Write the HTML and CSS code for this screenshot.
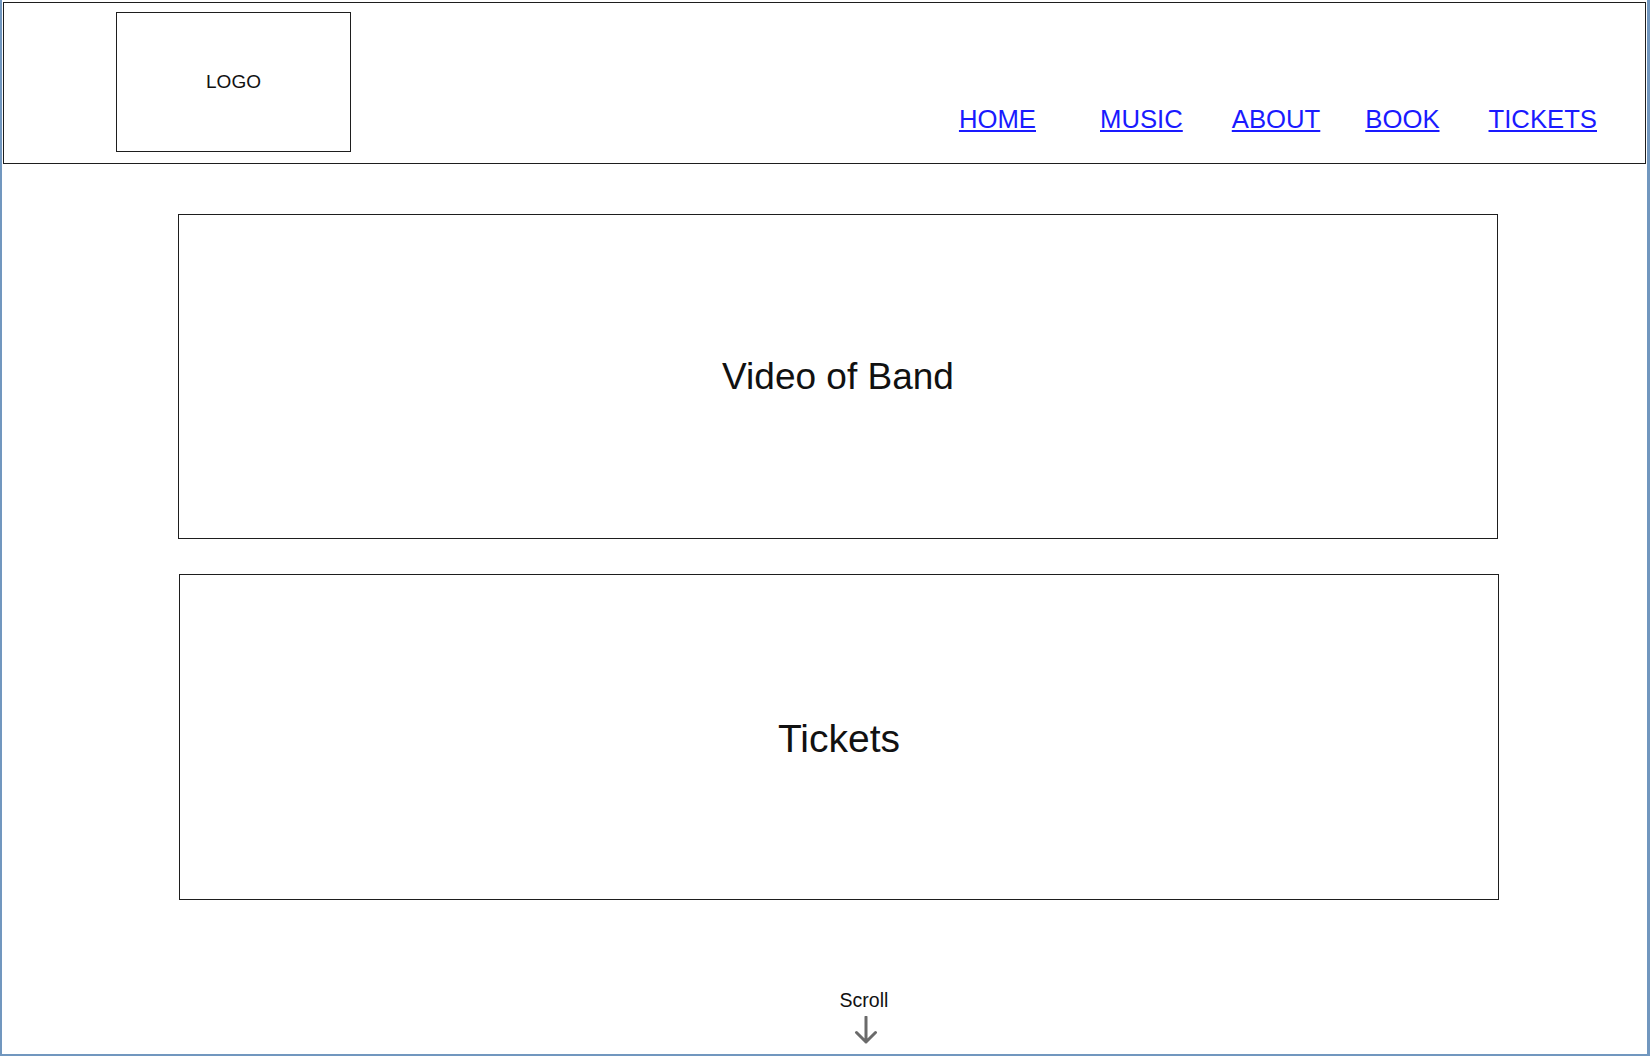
FILE: index.html
```html
<!DOCTYPE html>
<html lang="en">
<head>
<meta charset="utf-8">
<title>Band Wireframe</title>
<link rel="stylesheet" href="styles.css">
</head>
<body>
<div class="frame">
  <header class="header">
    <div class="logo">LOGO</div>
    <nav class="nav">
      <a href="#" class="nav-link nav-link--wide">HOME</a>
      <a href="#" class="nav-link nav-link--music">MUSIC</a>
      <a href="#" class="nav-link">ABOUT</a>
      <a href="#" class="nav-link nav-link--mid">BOOK</a>
      <a href="#" class="nav-link">TICKETS</a>
    </nav>
  </header>
  <main class="main">
    <section class="panel panel--video">Video of Band</section>
    <section class="panel panel--tickets">Tickets</section>
  </main>
  <div class="scroll">
    <span class="scroll-label">Scroll</span>
    <svg class="scroll-arrow" width="24" height="28" viewBox="0 0 24 28" aria-hidden="true">
      <path d="M12 1 V26 M2.5 16.5 L12 26 L21.5 16.5" fill="none" stroke="#6a6a6a" stroke-width="3" stroke-linecap="round" stroke-linejoin="round"/>
    </svg>
  </div>
</div>
</body>
</html>
```

FILE: styles.css
```css
* {
  box-sizing: border-box;
}

html, body {
  margin: 0;
  padding: 0;
  background: #ffffff;
}

body {
  width: 1650px;
  height: 1056px;
  overflow: hidden;
  font-family: "Liberation Sans", Arial, sans-serif;
  color: #111111;
}

.frame {
  width: 1650px;
  height: 1056px;
  border-left: 2px solid #7197bf;
  border-right: 3px solid #7197bf;
  border-bottom: 2px solid #7197bf;
  padding-top: 2px;
  display: flex;
  flex-direction: column;
}

.header {
  margin: 0 1px 0 1px;
  height: 162px;
  border: 1px solid #1e1e1e;
  display: flex;
  align-items: flex-start;
}

.logo {
  margin-left: 112px;
  margin-top: 9px;
  width: 235px;
  height: 140px;
  border: 1px solid #1e1e1e;
  display: flex;
  align-items: center;
  justify-content: center;
  font-size: 19px;
  color: #111111;
}

.nav {
  margin-left: auto;
  margin-right: 48px;
  margin-top: 101px;
  display: flex;
  gap: 45px;
  font-size: 25.7px;
  line-height: 30px;
}

.nav-link {
  color: #1a1aff;
  text-decoration: underline;
  text-underline-offset: 2px;
  text-decoration-thickness: 2px;
}

.nav-link--wide {
  margin-right: 19px;
}

.nav-link--music {
  margin-right: 4px;
}

.nav-link--mid {
  margin-right: 4px;
}

.main {
  display: flex;
  flex-direction: column;
  gap: 35px;
  margin-top: 50px;
}

.panel {
  width: 1320px;
  height: 325px;
  border: 1px solid #1e1e1e;
  display: flex;
  align-items: center;
  justify-content: center;
  font-size: 37px;
  color: #111111;
}

.panel--video {
  margin-left: 176px;
}

.panel--tickets {
  margin-left: 177px;
  height: 326px;
  font-size: 39px;
  padding-top: 4px;
}

.scroll {
  margin-top: 89px;
  margin-left: 812px;
  width: 100px;
  display: flex;
  flex-direction: column;
  align-items: center;
}

.scroll-label {
  font-size: 19.5px;
  line-height: 22px;
  color: #111111;
}

.scroll-arrow {
  display: block;
  margin-top: 5px;
  margin-left: 3px;
}
```
